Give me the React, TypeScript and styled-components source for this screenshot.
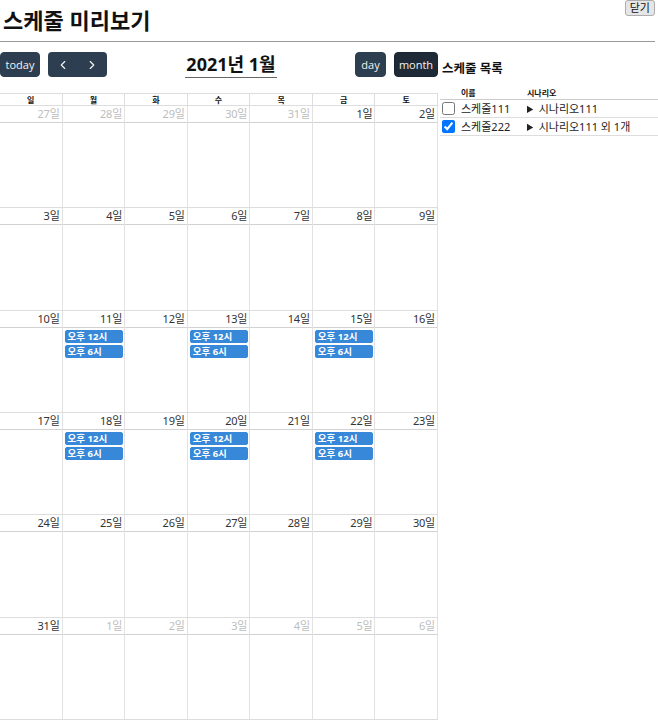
import React from "react";
import styled, { createGlobalStyle } from "styled-components";
import { ChevronLeft, ChevronRight } from "lucide-react";

const GlobalStyle = createGlobalStyle`
  html, body { margin: 0; padding: 0; background: #fff; }
  body {
    font-family: "Noto Sans", "Noto Sans CJK KR", sans-serif;
    color: #222;
  }
  * { box-sizing: border-box; }
`;

const KR = `"Noto Sans", "Noto Sans CJK KR", sans-serif`;

const Page = styled.div`
  width: 658px;
  overflow: hidden;
`;

const Header = styled.header`
  width: 655px;
  height: 42px;
  display: flex;
  justify-content: space-between;
  align-items: flex-start;
  border-bottom: 1px solid #9a9a9a;
`;

const Title = styled.h2`
  margin: 6px 0 0 3px;
  font-family: ${KR};
  font-size: 22px;
  line-height: 28px;
  font-weight: 700;
  color: #111;
`;

const CloseButton = styled.button`
  margin: 0;
  height: 16px;
  padding: 0 4px;
  font-family: ${KR};
  font-size: 11px;
  line-height: 14px;
  color: #111;
  background: #e6e6e6;
  border: 1px solid #adadad;
  border-radius: 3px;
`;

const Main = styled.div`
  display: flex;
  align-items: flex-start;
  margin-top: 10px;
`;

const CalendarColumn = styled.div`
  width: 438px;
  flex: none;
`;

const Toolbar = styled.div`
  display: flex;
  justify-content: space-between;
  align-items: center;
  height: 25px;
`;

const ToolGroup = styled.div`
  display: flex;
  gap: 8px;
`;

const ToolButton = styled.button<{ $active?: boolean; $w?: number }>`
  height: 25px;
  width: ${(p) => (p.$w ? `${p.$w}px` : "auto")};
  padding: 0;
  border: 1px solid ${(p) => (p.$active ? "#1a252f" : "#2c3e50")};
  background: ${(p) => (p.$active ? "#1e2b37" : "#2c3e50")};
  color: #f2f2f2;
  font-family: "Open Sans", "Noto Sans", sans-serif;
  font-size: 11px;
  line-height: 23px;
  border-radius: 4px;
  display: flex;
  align-items: center;
  justify-content: center;
`;

const ButtonPair = styled.div`
  display: flex;
  width: 59px;
  height: 25px;
  background: #2c3e50;
  border-radius: 4px;
`;

const PairButton = styled.button`
  flex: 1;
  border: 0;
  background: transparent;
  color: #f2f2f2;
  padding: 0;
  display: flex;
  align-items: center;
  justify-content: center;
`;

const MonthTitle = styled.div`
  font-family: ${KR};
  font-size: 18px;
  font-weight: 700;
  line-height: 22px;
  color: #111;
  border-bottom: 1px solid #666;
  padding: 0 1px 2px;
  margin-top: 2px;
`;

const Calendar = styled.div`
  margin-top: 16px;
  height: 627px;
  display: flex;
  flex-direction: column;
  border-top: 1px solid #ddd;
`;

const WeekHeader = styled.div`
  display: grid;
  grid-template-columns: repeat(7, 1fr);
  height: 12px;
  flex: none;
  border-bottom: 1px solid #ddd;
`;

const WeekdayCell = styled.div`
  border-right: 1px solid #ddd;
  font-family: ${KR};
  font-size: 8px;
  font-weight: 700;
  line-height: 11px;
  text-align: center;
  color: #111;
`;

const WeekRow = styled.div`
  flex: 1;
  display: grid;
  grid-template-columns: repeat(7, 1fr);
  border-bottom: 1px solid #ddd;
`;

const DayCell = styled.div`
  border-right: 1px solid #e2e2e2;
  display: flex;
  flex-direction: column;
  min-width: 0;
`;

const DayNumber = styled.div<{ $muted?: boolean }>`
  height: 17px;
  flex: none;
  border-bottom: 1px solid #d2d2d2;
  text-align: right;
  padding-right: 2px;
  font-family: ${KR};
  font-size: 11px;
  line-height: 16px;
  color: ${(p) => (p.$muted ? "#bdbdbd" : "#333")};
  letter-spacing: -0.2px;
`;

const Events = styled.div`
  display: flex;
  flex-direction: column;
  gap: 2px;
  padding: 2px 1px 0 2px;
`;

const EventChip = styled.div`
  height: 13px;
  background: #3788d8;
  border: 1px solid #3788d8;
  border-radius: 2px;
  color: #fff;
  font-family: ${KR};
  font-size: 9.5px;
  font-weight: 700;
  line-height: 11px;
  padding-left: 2px;
  white-space: nowrap;
  overflow: hidden;
`;

const Side = styled.aside`
  flex: 1;
  padding-left: 2px;
`;

const SideTitle = styled.div`
  margin: 9px 0 0 2px;
  font-family: ${KR};
  font-size: 12.5px;
  font-weight: 700;
  line-height: 16px;
  color: #111;
`;

const Table = styled.div`
  margin-top: 10px;
  display: grid;
  grid-template-columns: 21px 66px 1fr;
`;

const HeadCell = styled.div`
  font-family: ${KR};
  font-size: 8px;
  font-weight: 700;
  line-height: 11px;
  height: 13px;
  border-bottom: 1px solid #ccc;
  color: #111;
`;

const Cell = styled.div`
  height: 18px;
  border-bottom: 1px solid #ddd;
  font-family: ${KR};
  font-size: 11px;
  line-height: 17px;
  color: #222;
  display: flex;
  align-items: center;
  white-space: nowrap;
`;

const Check = styled.input`
  margin: 0 0 0 2px;
  width: 13px;
  height: 13px;
`;

const Details = styled.details`
  summary {
    cursor: default;
    list-style-position: inside;
  }
`;

type Day = { n: number; muted?: boolean; events?: boolean };

const weeks: Day[][] = [
  [{ n: 27, muted: true }, { n: 28, muted: true }, { n: 29, muted: true }, { n: 30, muted: true }, { n: 31, muted: true }, { n: 1 }, { n: 2 }],
  [{ n: 3 }, { n: 4 }, { n: 5 }, { n: 6 }, { n: 7 }, { n: 8 }, { n: 9 }],
  [{ n: 10 }, { n: 11, events: true }, { n: 12 }, { n: 13, events: true }, { n: 14 }, { n: 15, events: true }, { n: 16 }],
  [{ n: 17 }, { n: 18, events: true }, { n: 19 }, { n: 20, events: true }, { n: 21 }, { n: 22, events: true }, { n: 23 }],
  [{ n: 24 }, { n: 25 }, { n: 26 }, { n: 27 }, { n: 28 }, { n: 29 }, { n: 30 }],
  [{ n: 31 }, { n: 1, muted: true }, { n: 2, muted: true }, { n: 3, muted: true }, { n: 4, muted: true }, { n: 5, muted: true }, { n: 6, muted: true }],
];

const weekdays = ["일", "월", "화", "수", "목", "금", "토"];

const schedules = [
  { name: "스케줄111", scenario: "시나리오111", checked: false },
  { name: "스케줄222", scenario: "시나리오111 외 1개", checked: true },
];

export default function App() {
  return (
    <Page>
      <GlobalStyle />
      <Header>
        <Title>스케줄 미리보기</Title>
        <CloseButton>닫기</CloseButton>
      </Header>
      <Main>
        <CalendarColumn>
          <Toolbar>
            <ToolGroup>
              <ToolButton $w={40}>today</ToolButton>
              <ButtonPair>
                <PairButton aria-label="prev">
                  <ChevronLeft size={14} strokeWidth={2} />
                </PairButton>
                <PairButton aria-label="next">
                  <ChevronRight size={14} strokeWidth={2} />
                </PairButton>
              </ButtonPair>
            </ToolGroup>
            <MonthTitle>2021년 1월</MonthTitle>
            <ToolGroup>
              <ToolButton $w={31}>day</ToolButton>
              <ToolButton $w={44} $active>
                month
              </ToolButton>
            </ToolGroup>
          </Toolbar>
          <Calendar>
            <WeekHeader>
              {weekdays.map((w) => (
                <WeekdayCell key={w}>{w}</WeekdayCell>
              ))}
            </WeekHeader>
            {weeks.map((week, wi) => (
              <WeekRow key={wi}>
                {week.map((d, di) => (
                  <DayCell key={di}>
                    <DayNumber $muted={d.muted}>{d.n}일</DayNumber>
                    {d.events && (
                      <Events>
                        <EventChip>오후 12시</EventChip>
                        <EventChip>오후 6시</EventChip>
                      </Events>
                    )}
                  </DayCell>
                ))}
              </WeekRow>
            ))}
          </Calendar>
        </CalendarColumn>
        <Side>
          <SideTitle>스케줄 목록</SideTitle>
          <Table>
            <HeadCell />
            <HeadCell>이름</HeadCell>
            <HeadCell>시나리오</HeadCell>
            {schedules.map((s) => (
              <React.Fragment key={s.name}>
                <Cell>
                  <Check type="checkbox" defaultChecked={s.checked} />
                </Cell>
                <Cell>{s.name}</Cell>
                <Cell>
                  <Details>
                    <summary>{s.scenario}</summary>
                  </Details>
                </Cell>
              </React.Fragment>
            ))}
          </Table>
        </Side>
      </Main>
    </Page>
  );
}
